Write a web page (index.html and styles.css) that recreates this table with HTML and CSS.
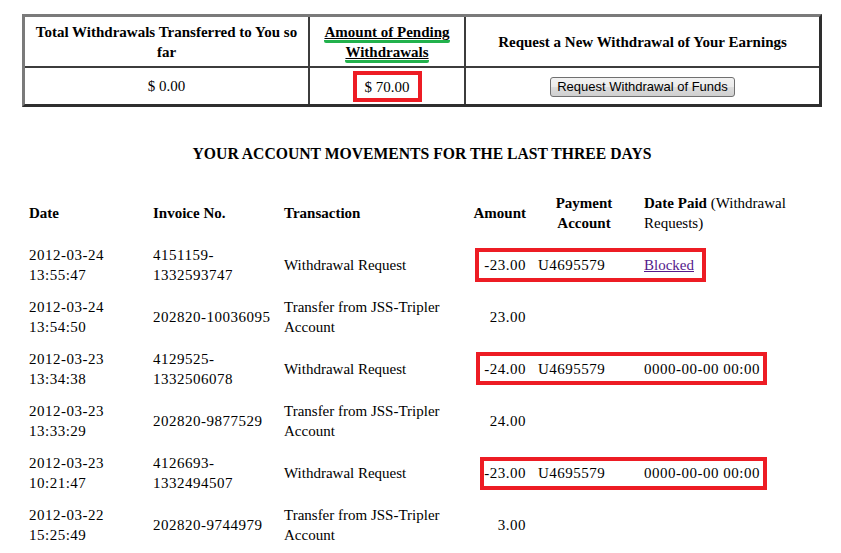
FILE: index.html
```html
<!DOCTYPE html>
<html>
<head>
<meta charset="utf-8">
<title>Account Movements</title>
<link rel="stylesheet" href="styles.css">
</head>
<body>
<div class="page">
  <div class="summary">
    <div class="sum-cell head">Total Withdrawals Transferred to You so far</div>
    <div class="sum-cell head"><div class="pending-wrap"><span class="pending">Amount of Pending</span> <span class="pending">Withdrawals</span></div></div>
    <div class="sum-cell head last-col">Request a New Withdrawal of Your Earnings</div>
    <div class="sum-cell data">$ 0.00</div>
    <div class="sum-cell data"><span class="mark-box">$ 70.00</span></div>
    <div class="sum-cell data last-col"><button class="req-btn" type="button">Request Withdrawal of Funds</button></div>
  </div>

  <h2 class="title">YOUR ACCOUNT MOVEMENTS FOR THE LAST THREE DAYS</h2>

  <div class="moves">
    <div class="row head-row">
      <div class="cell">Date</div>
      <div class="cell">Invoice No.</div>
      <div class="cell">Transaction</div>
      <div class="cell amt">Amount</div>
      <div class="cell acc-head">Payment<br>Account</div>
      <div class="cell paid-head"><b>Date Paid</b> (Withdrawal<br>Requests)</div>
    </div>

    <div class="row">
      <div class="cell num">2012-03-24<br>13:55:47</div>
      <div class="cell num">4151159-<br>1332593747</div>
      <div class="cell">Withdrawal Request</div>
      <div class="cell amt num">-23.00</div>
      <div class="cell num">U4695579</div>
      <div class="cell"><a class="blocked" href="#">Blocked</a></div>
      <div class="mark mark-1"></div>
    </div>

    <div class="row">
      <div class="cell num">2012-03-24<br>13:54:50</div>
      <div class="cell num">202820-10036095</div>
      <div class="cell">Transfer from JSS-Tripler<br>Account</div>
      <div class="cell amt num">23.00</div>
      <div class="cell"></div>
      <div class="cell"></div>
    </div>

    <div class="row">
      <div class="cell num">2012-03-23<br>13:34:38</div>
      <div class="cell num">4129525-<br>1332506078</div>
      <div class="cell">Withdrawal Request</div>
      <div class="cell amt num">-24.00</div>
      <div class="cell num">U4695579</div>
      <div class="cell num">0000-00-00 00:00</div>
      <div class="mark mark-3"></div>
    </div>

    <div class="row">
      <div class="cell num">2012-03-23<br>13:33:29</div>
      <div class="cell num">202820-9877529</div>
      <div class="cell">Transfer from JSS-Tripler<br>Account</div>
      <div class="cell amt num">24.00</div>
      <div class="cell"></div>
      <div class="cell"></div>
    </div>

    <div class="row">
      <div class="cell num">2012-03-23<br>10:21:47</div>
      <div class="cell num">4126693-<br>1332494507</div>
      <div class="cell">Withdrawal Request</div>
      <div class="cell amt num">-23.00</div>
      <div class="cell num">U4695579</div>
      <div class="cell num">0000-00-00 00:00</div>
      <div class="mark mark-5"></div>
    </div>

    <div class="row">
      <div class="cell num">2012-03-22<br>15:25:49</div>
      <div class="cell num">202820-9744979</div>
      <div class="cell">Transfer from JSS-Tripler<br>Account</div>
      <div class="cell amt num">3.00</div>
      <div class="cell"></div>
      <div class="cell"></div>
    </div>
  </div>
</div>
</body>
</html>
```

FILE: styles.css
```css
html, body {
  margin: 0;
  padding: 0;
  background: #ffffff;
  overflow: hidden;
}

body {
  font-family: "Liberation Serif", "Times New Roman", serif;
  font-size: 15px;
  line-height: 20px;
  color: #000000;
}

.page {
  width: 800px;
  padding: 14px 0 0 22px;
}

/* ---------- summary table ---------- */
.summary {
  width: 800px;
  box-sizing: border-box;
  display: grid;
  grid-template-columns: 285px 156px 353px;
  grid-template-rows: 51px 36px;
  border: 3px solid;
  border-color: #7a7a7a #2e2e2e #2e2e2e #7a7a7a;
}

.sum-cell {
  box-sizing: border-box;
  display: flex;
  align-items: center;
  justify-content: center;
  text-align: center;
  padding: 0 5px;
  border-right: 2px solid #3c3c3c;
}

.sum-cell.head {
  font-weight: bold;
  border-bottom: 2px solid #3c3c3c;
}

.sum-cell.last-col {
  border-right: none;
}

.pending-wrap {
  text-align: center;
}

.pending {
  text-decoration: underline;
  border-bottom: 3px solid #22b14c;
  border-radius: 2px;
}

.mark-box {
  display: inline-block;
  border: 4px solid #ed1c24;
  padding: 2px 8px 1px;
  line-height: 20px;
}

.req-btn {
  box-sizing: border-box;
  height: 20px;
  padding: 0 6px;
  margin: 1px 0 0;
  font-family: "Liberation Sans", Arial, sans-serif;
  font-size: 13px;
  line-height: 16px;
  color: #000000;
  border: 1px solid #707070;
  border-radius: 3px;
  background: linear-gradient(#f2f2f2 0%, #ebebeb 50%, #dddddd 51%, #cfcfcf 100%);
}

/* ---------- title ---------- */
.title {
  margin: 37px 0 0;
  font-size: 15.7px;
  line-height: 20px;
  font-weight: bold;
  text-align: center;
}

/* ---------- movements ---------- */
.moves {
  margin-top: 23px;
  width: 800px;
}

.row {
  position: relative;
  display: grid;
  grid-template-columns: 124px 131px 190px 64px 106px 185px;
  height: 52px;
  align-items: center;
}

.cell {
  padding-left: 7px;
}

.head-row .cell {
  font-weight: bold;
}

.head-row .paid-head {
  font-weight: normal;
}

.head-row .acc-head {
  padding-left: 0;
  text-align: center;
}

.cell.amt {
  padding-left: 0;
  padding-right: 5px;
  text-align: right;
}

.num {
  letter-spacing: 0.5px;
}

.blocked {
  color: #551a8b;
  text-decoration: underline;
}

/* red annotation boxes drawn over the rows */
.mark {
  position: absolute;
  box-sizing: border-box;
  border: 4px solid #ed1c24;
}

.mark-1 {
  left: 453px;
  top: 9px;
  width: 231px;
  height: 34px;
}

.mark-3 {
  left: 454px;
  top: 9px;
  width: 291px;
  height: 33px;
}

.mark-5 {
  left: 458px;
  top: 10px;
  width: 287px;
  height: 33px;
}
```
